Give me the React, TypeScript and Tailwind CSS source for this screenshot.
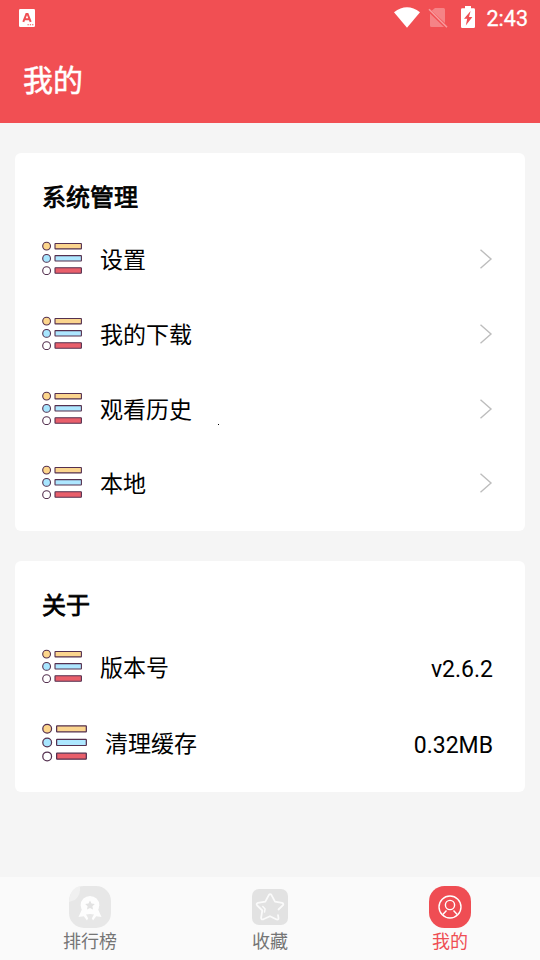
import type { ReactNode } from "react";

function ListIcon({ className }: { className: string }) {
  return (
    <svg viewBox="0 0 40 34" className={className} fill="none" stroke="#54304f" strokeWidth="1.1">
      <circle cx="4.6" cy="5.1" r="3.9" fill="#fdd68c" />
      <circle cx="4.6" cy="17.4" r="3.9" fill="#a8e6ff" />
      <circle cx="4.6" cy="29.7" r="3.9" fill="#fff" />
      <rect x="13" y="2.5" width="26.4" height="5.4" rx="0.4" fill="#fbd58e" />
      <rect x="13" y="14.6" width="26.4" height="5.4" rx="0.4" fill="#aee7ff" />
      <rect x="13" y="26.8" width="26.4" height="5.4" rx="0.4" fill="#e95f6b" />
    </svg>
  );
}

function Chevron() {
  return (
    <svg viewBox="0 0 14 22" className="h-[22px] w-[14px]" fill="none" stroke="#bdbdbd" strokeWidth="1.4">
      <path d="M1.5 1.8 12 11 1.5 20.2" />
    </svg>
  );
}

function Row({ label, height, value, large }: { label: string; height: string; value?: string; large?: boolean }) {
  return (
    <div className={`flex items-center pr-8 pl-[26.5px] ${height}`}>
      <ListIcon className={large ? "mb-px h-[38.25px] w-[45px] shrink-0" : "mb-px h-[34px] w-10 shrink-0"} />
      <span className="ml-[18.5px] flex-1 pt-1 text-[23px] leading-[34px]">{label}</span>
      {value ? (
        <span className={`text-[23px] leading-[30px] ${large ? "pt-[5px]" : "pt-[7px]"}`}>{value}</span>
      ) : (
        <Chevron />
      )}
    </div>
  );
}

function Card({ title, className, children }: { title: string; className: string; children: ReactNode }) {
  return (
    <section className={`mx-[15px] rounded-md bg-white pt-[26px] ${className}`}>
      <h2 className="pl-[27px] text-[24px] leading-[38px] font-normal [-webkit-text-stroke:0.8px_black]">{title}</h2>
      {children}
    </section>
  );
}

function StatusBar() {
  return (
    <div className="flex h-9 items-center pr-3 pl-[19px]">
      <svg viewBox="0 0 16 18" className="h-[18px] w-4">
        <rect width="16" height="18" rx="1.2" fill="#fff" />
        <path d="M4.3 12.8 7.4 5h1.2l3.1 7.8M5.8 10.3h4.4" fill="none" stroke="#ef4f53" strokeWidth="2" />
        <path d="M8.5 15.8h1.3m1 0h1.3m1 0h1.3" stroke="#ef4f53" strokeWidth="1.1" />
      </svg>
      <svg viewBox="0 0 26 21" className="mb-px ml-auto h-[21px] w-[26px]" fill="#fff">
        <path d="M0 5.2Q13-4.7 26 5.2L13 20.8Z" />
      </svg>
      <svg viewBox="0 0 20 20" className="ml-2 h-5 w-5">
        <path d="M7 0h8.5q1.5 0 1.5 1.5V15L3.7 2.8ZM2 5.5 16 19H3.5Q2 19 2 17.5Z" fill="#f58386" />
        <path d="M1 1.2 19 19.3" stroke="#f79b9e" strokeWidth="1.5" />
      </svg>
      <svg viewBox="0 0 14 22" className="mr-px mb-[2px] ml-[13px] h-[22px] w-[14px]">
        <path d="M4 0h6v2.3h2.7Q14 2.3 14 3.7v17Q14 22 12.7 22H1.3Q0 22 0 20.7v-17Q0 2.3 1.3 2.3H4Z" fill="#fff" />
        <path d="M9.6 5 3 12.8h3.2L4.8 19.4 11.4 11H8Z" fill="#ef4f53" />
      </svg>
      <time className="ml-[11px] pt-[2px] text-[21.5px] leading-6 [-webkit-text-stroke:0.3px_white]">2:43</time>
    </div>
  );
}

function RankIcon() {
  return (
    <svg viewBox="0 0 42 42" className="h-[42px] w-[42px]">
      <rect width="42" height="42" rx="15" fill="#e7e7e7" />
      <path d="M0 16Q1 2 11 0Q12 9 6 14Z" fill="#f0f0f0" />
      <g fill="#fdfdfd">
        <circle cx="21" cy="19.2" r="9.3" />
        <path d="M14 21 9.5 31l5.3-.8 3.2 4.3 4.5-9Zm14 0 4.5 10-5.3-.8-3.2 4.3-4.5-9Z" />
      </g>
      <path d="m21 14.5 1.5 3 3.3.4-2.4 2.3.6 3.3-3-1.6-3 1.6.6-3.3-2.4-2.3 3.3-.4Z" fill="#e2e2e2" />
      <path d="M17 28.5q4-1 8 0L23 32h-4Z" fill="#e7e7e7" />
    </svg>
  );
}

function StarIcon() {
  return (
    <svg viewBox="0 0 36 36" className="h-9 w-9" fill="none" strokeLinecap="round" strokeLinejoin="round">
      <rect width="36" height="36" rx="7" fill="#e2e2e2" />
      <path
        d="M26.5 20.5 31 16.2q1-1.7-1-2.4l-7-1.1-3.5-6.6q-1.3-2-2.7 0l-3.5 6.6-7.4 1.1q-2 .7-.8 2.5l5.2 5.2-1.2 7.3q0 2.2 2.2 1.5L18 27.2l6.7 3.3q2 .5 1.8-1.4l-.5-3"
        stroke="#fafafa"
        strokeWidth="1.8"
      />
      <path d="m10.8 17.5 2.3 2.4-.6 3.2" stroke="#fafafa" strokeWidth="1.5" />
    </svg>
  );
}

function ProfileIcon() {
  return (
    <svg viewBox="0 0 42 42" className="h-[42px] w-[42px]" fill="none" stroke="#fff" strokeWidth="1.4">
      <rect width="42" height="42" rx="15.5" fill="#ef4d53" stroke="none" />
      <circle cx="21" cy="21" r="11" />
      <circle cx="21" cy="19" r="4.6" />
      <path d="m17.5 24.5-3.7 4M24.5 24.5l3.7 4" />
    </svg>
  );
}

function Tab({ label, active, children }: { label: string; active?: boolean; children: ReactNode }) {
  return (
    <button className={`flex flex-1 flex-col items-center pt-[9px] text-[18px] leading-6 ${active ? "text-[#ef4d53]" : "text-[#757575]"}`}>
      <span className="flex h-[42px] items-center">{children}</span>
      <span className="pt-[2px]">{label}</span>
    </button>
  );
}

export default function App() {
  return (
    <div className="flex h-[960px] w-[540px] flex-col overflow-hidden bg-[#f5f5f5] font-[Roboto,'Noto_Sans_CJK_SC',sans-serif] text-black">
      <header className="h-[123px] shrink-0 bg-[#f14f53] text-white">
        <StatusBar />
        <h1 className="pt-[23px] pl-[23px] text-[30px] leading-[44px] font-normal [-webkit-text-stroke:0.5px_white]">我的</h1>
      </header>
      <main className="relative flex flex-1 flex-col gap-[30px] pt-[30px]">
        <Card title="系统管理" className="h-[378px]">
          <div className="pt-[4px]">
            <Row label="设置" height="h-[75px]" />
            <Row label="我的下载" height="h-[75px]" />
            <Row label="观看历史" height="h-[75px]" />
            <Row label="本地" height="h-[73px]" />
          </div>
        </Card>
        <Card title="关于" className="h-[231px]">
          <div className="pt-[4px]">
            <Row label="版本号" height="h-[75px]" value="v2.6.2" />
            <Row label="清理缓存" height="h-[78px]" value="0.32MB" large />
          </div>
        </Card>
        <span className="absolute top-[301px] left-[218px] h-px w-px bg-black" />
      </main>
      <nav className="flex h-[83px] shrink-0 bg-[#fafafa]">
        <Tab label="排行榜"><RankIcon /></Tab>
        <Tab label="收藏"><StarIcon /></Tab>
        <Tab label="我的" active><ProfileIcon /></Tab>
      </nav>
    </div>
  );
}
